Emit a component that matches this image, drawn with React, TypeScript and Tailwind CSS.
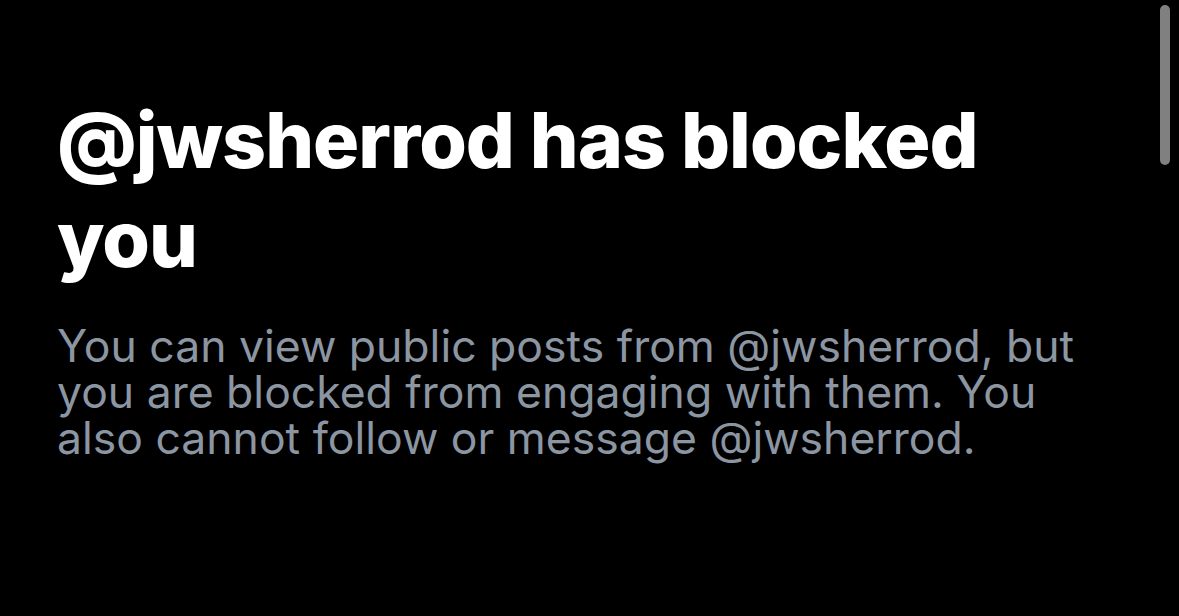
export default function App() {
  return (
    <div className="relative h-[616px] w-[1179px] overflow-hidden bg-black">
      <div className="px-[57px] pt-[91px]">
        <h1 className="font-['Inter',sans-serif] text-[77px] font-extrabold leading-[99px] tracking-[-1px] text-white">
          @jwsherrod has blocked
          <br />
          you
        </h1>
        <p className="mt-[34px] font-['Inter',sans-serif] text-[44.5px] leading-[46px] text-[#8b96a2]">
          You can view public posts from @jwsherrod, but
          <br />
          you are blocked from engaging with them. You
          <br />
          also cannot follow or message @jwsherrod.
        </p>
      </div>
      <div className="absolute right-[9px] top-[5px] h-[160px] w-[10px] rounded-full bg-[#808080]" />
    </div>
  );
}
